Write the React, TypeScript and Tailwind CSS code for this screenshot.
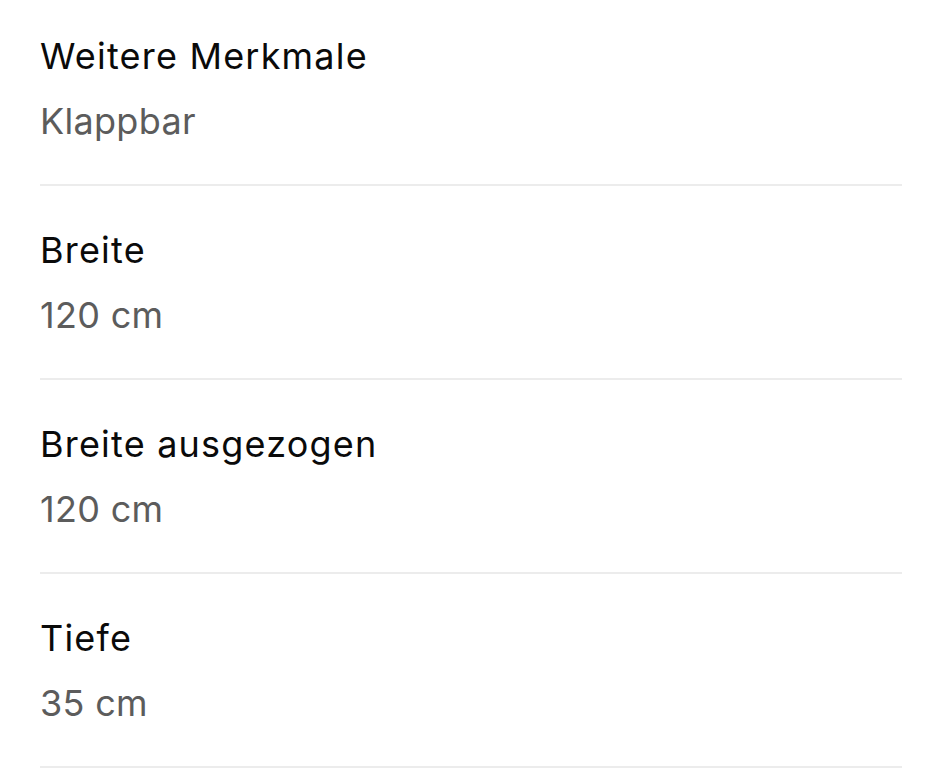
const specs = [
  { label: "Weitere Merkmale", value: "Klappbar" },
  { label: "Breite", value: "120 cm" },
  { label: "Breite ausgezogen", value: "120 cm" },
  { label: "Tiefe", value: "35 cm" },
];

export default function App() {
  return (
    <div className="min-h-screen bg-white font-['Inter',sans-serif]">
      <div className="pl-[40px] pr-[31px]">
        {specs.map((s, i) => (
          <div
            key={s.label}
            className={`border-b-2 border-[#ececec] pb-[30px] ${i === 0 ? "pt-[24px]" : "pt-[32px]"}`}
          >
            <div className="text-[36px] leading-[65px] tracking-[1.2px] text-[#0a0a0a]">
              {s.label}
            </div>
            <div className="text-[36px] leading-[65px] tracking-[0.3px] text-[#5c5c5c]">
              {s.value}
            </div>
          </div>
        ))}
      </div>
    </div>
  );
}
